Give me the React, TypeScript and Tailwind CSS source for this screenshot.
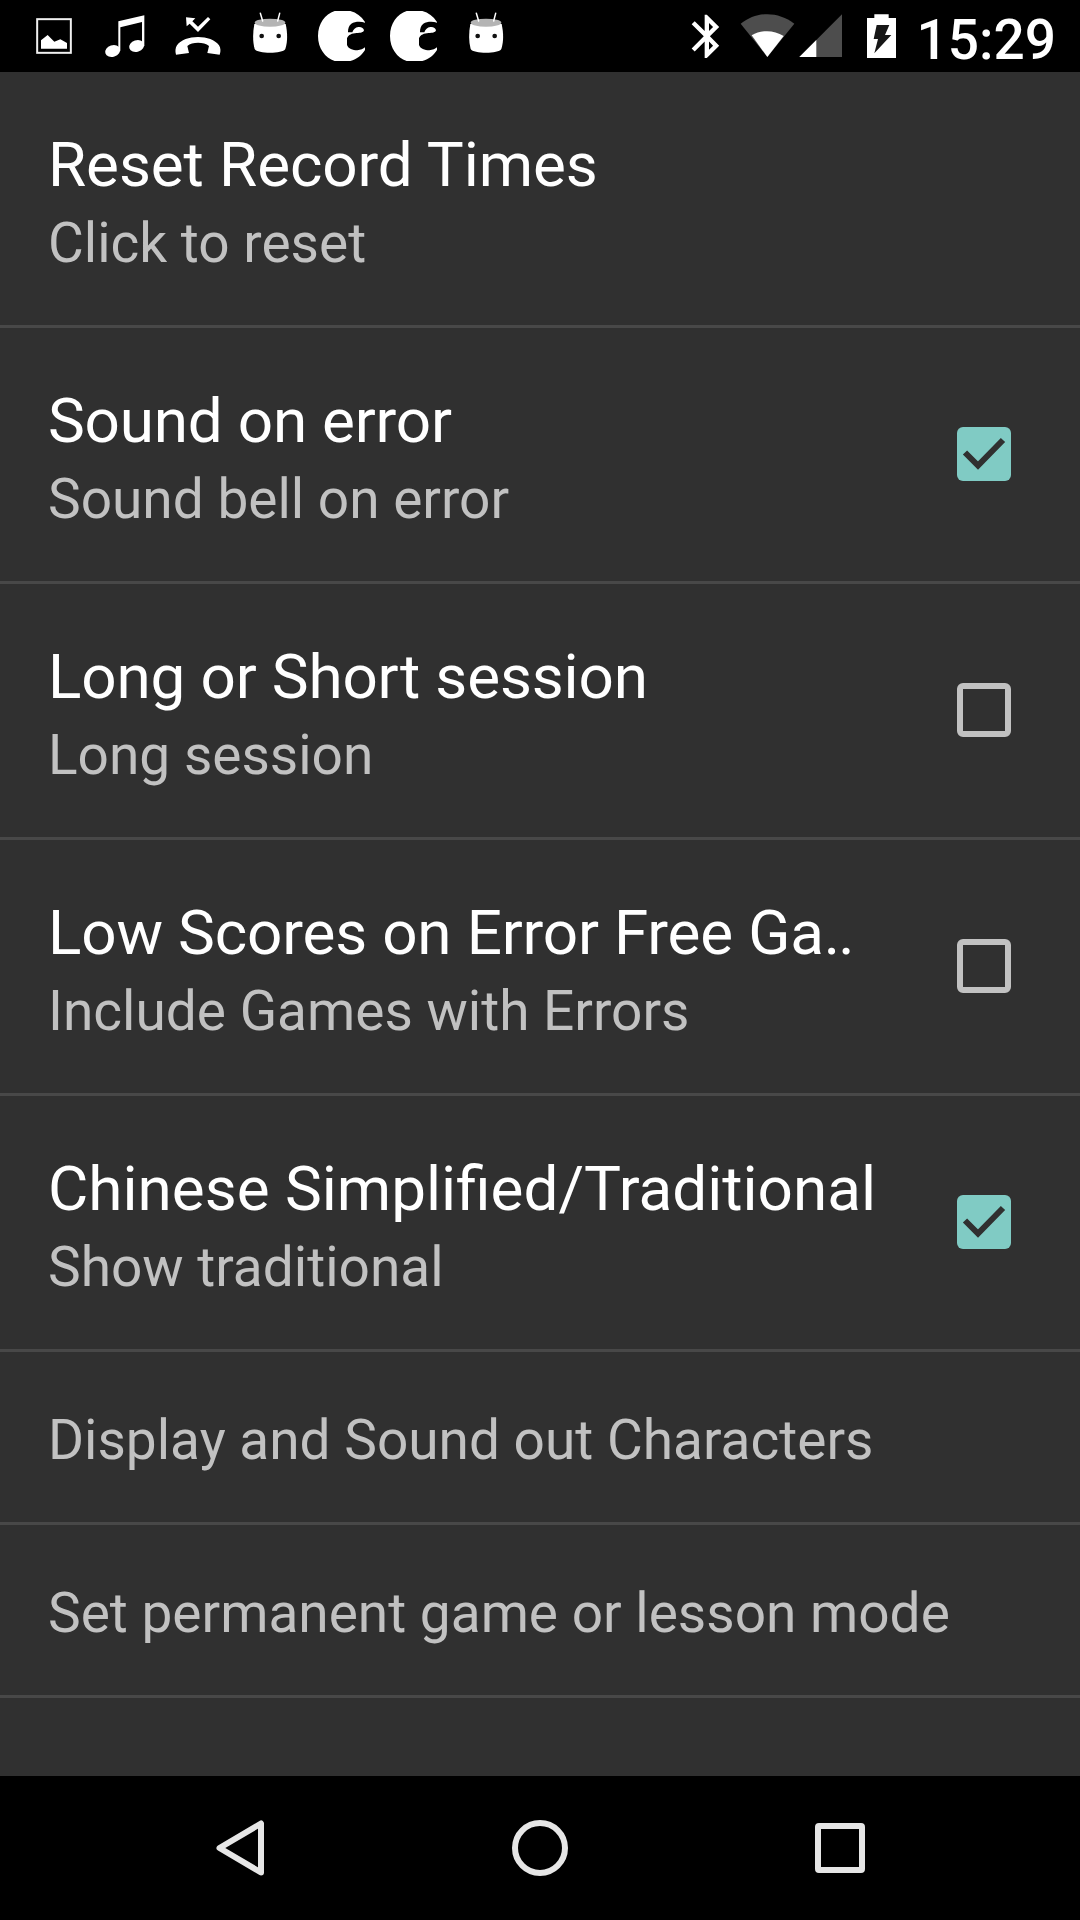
import React from 'react';

type Setting = { title?: React.ReactNode; summary: string; checked?: boolean };

const settings: Setting[] = [
  { title: <span className="tracking-[-0.1px]">Reset Record Times</span>, summary: 'Click to reset' },
  { title: <span className="tracking-[-0.2px]">Sound on error</span>, summary: 'Sound bell on error', checked: true },
  { title: <span className="tracking-[-0.15px]">Long or Short session</span>, summary: 'Long session', checked: false },
  {
    title: (
      <span className="tracking-[-0.17px]">
        Low Scores on Error Free Ga<span className="tracking-[-2px]">..</span>
      </span>
    ),
    summary: 'Include Games with Errors',
    checked: false,
  },
  { title: 'Chinese Simplified/Traditional', summary: 'Show traditional', checked: true },
  { summary: 'Display and Sound out Characters' },
  { summary: 'Set permanent game or lesson mode' },
];

function PictureIcon() {
  return (
    <svg className="size-[72px]" viewBox="-6 0 216 216">
      <rect x="51.5" y="57.5" width="101" height="101" fill="none" stroke="#f0f0f0" strokeWidth="6" />
      <path d="M63 146V121L83 105L103 125L121 118L141 129V146Z" fill="#fff" />
    </svg>
  );
}

function MusicIcon() {
  return (
    <svg className="size-[72px]" viewBox="210 0 216 216" fill="#fff">
      <path d="M295 64L373 46V138H366V66L301 82V152H295Z" />
      <ellipse cx="278" cy="153" rx="23" ry="17" transform="rotate(-18 278 153)" />
      <ellipse cx="350" cy="138" rx="23" ry="17" transform="rotate(-18 350 138)" />
    </svg>
  );
}

function MissedCallIcon() {
  return (
    <svg className="size-[72px]" viewBox="426 0 216 216" fill="#fff">
      <path d="M498 52L526 55L517 64L534 80L564 51L571 58L534 96L509 71L500 79Z" />
      <path d="M468 164C465 154 466 144 471 136C483 119 507 111 534 111C561 111 585 119 597 136C602 144 603 154 599 164L562 159L567 138C552 125 516 125 502 138L507 159Z" />
    </svg>
  );
}

function MarshmallowIcon() {
  return (
    <svg className="size-[72px]" viewBox="642 0 216 216">
      <path d="M703 72C698 100 698 125 704 147C712 162 788 162 796 147C803 125 803 100 797 72Z" fill="#fff" />
      <ellipse cx="750" cy="68" rx="46" ry="12" fill="#b4b4b4" />
      <path d="M721 40L728 63M779 40L773 63" stroke="#fff" strokeWidth="4.5" strokeLinecap="round" />
      <circle cx="725" cy="108" r="7" fill="#111" />
      <circle cx="776" cy="108" r="7" fill="#111" />
    </svg>
  );
}

function CrescentIcon() {
  return (
    <svg className="size-[72px]" viewBox="18 0 216 216">
      <path
        d="M104 33H151C169 38 184 49 195 66V68C183 64 165 64 154 71C147 76 144 85 144 97H157C160 88 166 82 175 81C184 80 191 84 192 91C190 98 181 99 170 99C156 100 145 104 141 115V135C145 146 158 151 172 151C182 150 190 146 195 142V150C186 165 171 177 151 183H104C75 173 54 145 54 108C54 71 75 43 104 33Z"
        fill="#fff"
      />
    </svg>
  );
}

function StatusBar() {
  return (
    <header className="flex h-[72px] shrink-0 items-start justify-between bg-black pl-[18px] pr-[24px]">
      <div className="flex">
        <PictureIcon />
        <MusicIcon />
        <MissedCallIcon />
        <MarshmallowIcon />
        <CrescentIcon />
        <CrescentIcon />
        <MarshmallowIcon />
      </div>
      <div className="flex">
        <svg className="h-[72px] w-[30px]" viewBox="60 0 90 216">
          <path
            transform="translate(32.5 31) scale(6.5)"
            d="M17.71 7.71L12 2h-1v7.59L6.41 5 5 6.41 10.59 12 5 17.59 6.41 19 11 14.41V22h1l5.71-5.71-4.3-4.29 4.3-4.29zM13 5.83l1.88 1.88L13 9.59V5.83zm1.88 10.46L13 18.17v-3.76l1.88 1.88z"
            fill="#fff"
          />
        </svg>
        <svg className="ml-[20px] h-[72px] w-[55px]" viewBox="210 0 165 216">
          <path d="M292 171L212 71C260 33 324 33 373 71Z" fill="#4d4d4d" />
          <path d="M292 171L245 106C274 89 311 89 341 108Z" fill="#fff" />
        </svg>
        <svg className="ml-[4px] h-[72px] w-[44px]" viewBox="387 0 132 216">
          <path d="M388 171L516 43V171Z" fill="#4d4d4d" />
          <path d="M388 171L439 120V171Z" fill="#fff" />
        </svg>
        <svg className="ml-[23px] h-[72px] w-[31px]" viewBox="588 0 93 216">
          <path d="M591 54H613V43H656V54H678V174H591Z" fill="#fff" />
          <path d="M620 75H658L645 105H664L613 160L624 117H611Z" fill="#161616" />
        </svg>
        <span className="ml-[19px] mt-[3px] text-[55px] font-medium leading-[74px] text-white">15:29</span>
      </div>
    </header>
  );
}

function Checkbox({ checked }: { checked: boolean }) {
  if (!checked) {
    return <span className="mt-[99px] size-[54px] shrink-0 rounded-[6px] border-[6px] border-[#c1c1c1]" />;
  }
  return (
    <span className="mt-[99px] size-[54px] shrink-0 rounded-[6px] bg-[#80cbc4]">
      <svg className="size-[54px]" viewBox="0 0 54 54" fill="none">
        <path d="M8 25.5L21 38.5L46 13" stroke="#303030" strokeWidth="6" />
      </svg>
    </span>
  );
}

function SettingRow({ title, summary, checked }: Setting) {
  if (!title) {
    return (
      <li className="flex h-[173px] items-center border-b-[3px] border-[#484848] pl-[48px] pt-[6px]">
        <span className="whitespace-nowrap text-[55px] leading-[64px] text-[#c1c1c1]">{summary}</span>
      </li>
    );
  }
  return (
    <li className="flex h-[256px] items-start justify-between border-b-[3px] border-[#484848] pl-[48px] pr-[69px]">
      <div className="whitespace-nowrap pt-[53px]">
        <div className="text-[62px] leading-[80px] text-white">{title}</div>
        <div className="text-[55px] leading-[77px] text-[#c1c1c1]">{summary}</div>
      </div>
      {checked !== undefined && <Checkbox checked={checked} />}
    </li>
  );
}

export default function App() {
  return (
    <div className="flex h-[1920px] w-[1080px] flex-col overflow-hidden bg-[#303030] font-[Roboto,sans-serif]">
      <StatusBar />
      <ul className="flex-1">
        {settings.map((s) => (
          <SettingRow key={s.summary} {...s} />
        ))}
      </ul>
      <nav className="flex h-[144px] shrink-0 items-center justify-between bg-black pl-[216px] pr-[215px]">
        <svg className="h-[56px] w-[48px]" viewBox="0 0 48 56" fill="none">
          <path d="M45 3.5V52.5L3.5 28Z" stroke="#e6e6e6" strokeWidth="6" strokeLinejoin="round" />
        </svg>
        <span className="size-[56px] rounded-full border-[6px] border-[#e6e6e6]" />
        <span className="size-[50px] rounded-[4px] border-[6px] border-[#e6e6e6]" />
      </nav>
    </div>
  );
}
